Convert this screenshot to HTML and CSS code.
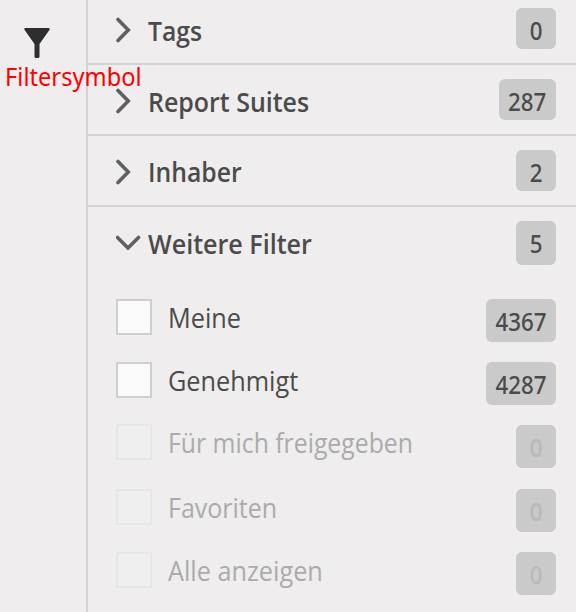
FILE: index.html
```
<!DOCTYPE html>
<html lang="de">
<head>
<meta charset="utf-8">
<title>Filter</title>
<link rel="stylesheet" href="styles.css">
</head>
<body>
<div class="app">
  <aside class="rail">
    <svg class="funnel" width="26" height="31" viewBox="0 0 26 31"><path d="M1 0H25Q26.3 .6 25.2 2.3L15.5 16V28.5Q15.5 30 14 30H11.8Q10.5 30 10.5 28.5V16L.8 2.3Q-.3 .6 1 0Z"/></svg>
    <span class="callout">Filtersymbol</span>
  </aside>
  <main class="panel">
    <section class="group first">
      <svg class="chevron" width="26" height="41" viewBox="0 0 26 41"><path d="M2 11.5 12.3 22 2 32.5"/></svg>
      <h2 class="title tags">Tags</h2><span class="badge"><span class="num">0</span></span>
    </section>
    <section class="group">
      <svg class="chevron" width="26" height="41" viewBox="0 0 26 41"><path d="M2 11.5 12.3 22 2 32.5"/></svg>
      <h2 class="title suites">Report Suites</h2><span class="badge w3"><span class="num">287</span></span>
    </section>
    <section class="group">
      <svg class="chevron" width="26" height="41" viewBox="0 0 26 41"><path d="M2 11.5 12.3 22 2 32.5"/></svg>
      <h2 class="title owner">Inhaber</h2><span class="badge"><span class="num">2</span></span>
    </section>
    <section class="group open">
      <svg class="chevron" width="26" height="41" viewBox="0 0 26 41"><path d="M1.5 16.5 12 27 22.5 16.5"/></svg>
      <h2 class="title more">Weitere Filter</h2><span class="badge"><span class="num">5</span></span>
    </section>
    <ul class="options">
      <li class="option"><span class="box"></span><span class="label mine">Meine</span><span class="badge w4"><span class="num">4367</span></span></li>
      <li class="option"><span class="box"></span><span class="label approved">Genehmigt</span><span class="badge w4"><span class="num">4287</span></span></li>
      <li class="option off shared"><span class="box"></span><span class="label with-me">Für mich freigegeben</span><span class="badge"><span class="num">0</span></span></li>
      <li class="option off"><span class="box"></span><span class="label favorites">Favoriten</span><span class="badge"><span class="num">0</span></span></li>
      <li class="option off"><span class="box"></span><span class="label all">Alle anzeigen</span><span class="badge"><span class="num">0</span></span></li>
    </ul>
  </main>
</div>
</body>
</html>
```
FILE: styles.css
```
* { box-sizing: border-box; }
body { margin: 0; background: #efeded; font-family: "Open Sans", "Noto Sans", sans-serif; color: #4b4b4b; }
.app { display: flex; width: 576px; height: 612px; overflow: hidden; }
.rail { position: relative; width: 88px; border-right: 2px solid #d3d3d3; padding: 28px 0 0 24px; flex: none; }
.funnel { display: block; fill: #2e2e2e; }
.callout { position: absolute; left: 5px; top: 59px; z-index: 1; font-family: "Noto Sans", sans-serif; font-size: 26px; line-height: 35px; color: #f00; transform: scaleX(.91); transform-origin: 0 0; white-space: nowrap; }
.panel { flex: 1; min-width: 0; }
.group { display: flex; align-items: flex-start; height: 71px; padding: 14px 20px 0 28px; border-bottom: 2px solid #d3d3d3; }
.group.first { height: 65px; padding-top: 8px; }
.group.open { height: 92px; border: 0; }
.chevron { flex: none; margin-right: 5.5px; fill: none; stroke: #606060; stroke-width: 3.6; stroke-linecap: round; }
.title { flex: 1; margin: 0; font-size: 26.6px; font-weight: 600; line-height: 47px; white-space: nowrap; transform: scaleX(.93); transform-origin: 0 0; }
.suites { transform: scaleX(.938); }
.owner { line-height: 45px; }
.more { transform: scaleX(.943); }
.badge { flex: none; width: 40px; height: 41px; line-height: 46px; border-radius: 6px; background: #cacaca; font-family: "Noto Sans", sans-serif; font-size: 24.5px; font-weight: 500; text-align: center; }
.open .badge { height: 44px; }
.w3 { width: 57px; }
.w4 { width: 70px; }
.num { display: inline-block; transform: scaleX(.91); margin: 0 -4px; }
.options { list-style: none; margin: 0; padding: 0 20px 0 28px; display: grid; grid-template-rows: 63px 63px 64px 63px 60px; }
.option { display: flex; align-items: flex-start; }
.option .badge { height: 43px; }
.box { flex: none; width: 36px; height: 36px; border: 2px solid #cfcfcf; background: #fafafa; margin-right: 16px; }
.label { flex: 1; font-size: 26.6px; line-height: 38px; white-space: nowrap; transform: scaleX(.95); transform-origin: 0 0; }
.with-me { line-height: 37px; transform: scaleX(.932); }
.favorites { transform: scaleX(.94); }
.off { color: #ababab; }
.off .box { border-color: #e6e6e6; background: #efefef; }
.off .badge { color: #b9b9b9; }
.shared .box { margin-top: -1px; }
```
